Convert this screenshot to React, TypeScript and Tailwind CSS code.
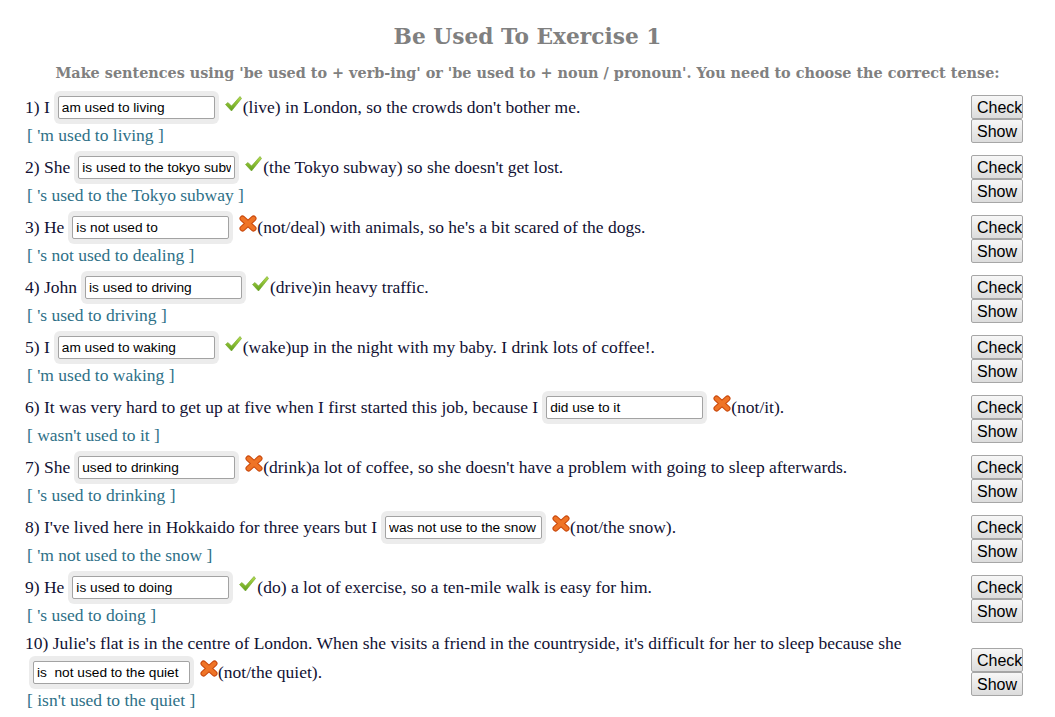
import { ReactNode } from "react";

type Question = {
  pre?: string;
  lead?: string;
  value: string;
  ok: boolean;
  post: string;
  answer: string;
};

const questions: Question[] = [
  { pre: "1) I", value: "am used to living", ok: true, post: "(live) in London, so the crowds don't bother me.", answer: "[ 'm used to living ]" },
  { pre: "2) She", value: "is used to the tokyo subway", ok: true, post: "(the Tokyo subway) so she doesn't get lost.", answer: "[ 's used to the Tokyo subway ]" },
  { pre: "3) He", value: "is not used to", ok: false, post: "(not/deal) with animals, so he's a bit scared of the dogs.", answer: "[ 's not used to dealing ]" },
  { pre: "4) John", value: "is used to driving", ok: true, post: "(drive)in heavy traffic.", answer: "[ 's used to driving ]" },
  { pre: "5) I", value: "am used to waking", ok: true, post: "(wake)up in the night with my baby. I drink lots of coffee!.", answer: "[ 'm used to waking ]" },
  {
    pre: "6) It was very hard to get up at five when I first started this job, because I",
    value: "did use to it",
    ok: false,
    post: "(not/it).",
    answer: "[ wasn't used to it ]"
  },
  {
    pre: "7) She",
    value: "used to drinking",
    ok: false,
    post: "(drink)a lot of coffee, so she doesn't have a problem with going to sleep afterwards.",
    answer: "[ 's used to drinking ]"
  },
  { pre: "8) I've lived here in Hokkaido for three years but I", value: "was not use to the snow", ok: false, post: "(not/the snow).", answer: "[ 'm not used to the snow ]" },
  { pre: "9) He", value: "is used to doing", ok: true, post: "(do) a lot of exercise, so a ten-mile walk is easy for him.", answer: "[ 's used to doing ]" },
  {
    lead: "10) Julie's flat is in the centre of London. When she visits a friend in the countryside, it's difficult for her to sleep because she",
    value: "is  not used to the quiet",
    ok: false,
    post: "(not/the quiet).",
    answer: "[ isn't used to the quiet ]"
  }
];

function Tick() {
  return (
    <svg width="17" height="16" viewBox="0 0 17 16" className="mt-[5px] ml-[2px] mr-[1px] shrink-0 self-start">
      <defs>
        <linearGradient id="tk" x1="0" y1="0" x2="0" y2="1">
          <stop offset="0" stopColor="#b5dc4a" />
          <stop offset="1" stopColor="#5f9e1c" />
        </linearGradient>
      </defs>
      <polygon points="0.5,8.5 3,6.5 6.5,10 15,0.5 16.5,2.5 6.5,15" fill="url(#tk)" stroke="#6fa52a" strokeWidth="0.6" />
    </svg>
  );
}

function Cross() {
  return (
    <svg width="18" height="17" viewBox="0 0 18 17" className="mt-[4px] ml-[2px] shrink-0 self-start">
      <g strokeLinecap="round">
        <path d="M3.5 3.5 L14.5 13.5 M14.5 3.5 L3.5 13.5" stroke="#c9480c" strokeWidth="6" />
        <path d="M3.5 3.5 L14.5 13.5 M14.5 3.5 L3.5 13.5" stroke="#ef7426" strokeWidth="4" />
      </g>
    </svg>
  );
}

function Field({ value }: { value: string }) {
  return (
    <span className="mx-[4px] inline-flex h-[33px] shrink-0 items-center rounded-[6px] bg-[#ececec] px-[4px]">
      <input
        readOnly
        value={value}
        className="h-[23px] w-[157px] rounded-[2px] border border-[#a3a3a3] bg-white px-[3px] font-['Liberation_Sans',Arial,sans-serif] text-[13.7px] text-black outline-none"
      />
    </span>
  );
}

function Line({ children }: { children: ReactNode }) {
  return <div className="flex h-[33px] items-center whitespace-nowrap">{children}</div>;
}

const btn =
  "h-[24px] w-[52px] overflow-hidden whitespace-nowrap rounded-[2px] border border-[#a6a6a6] bg-[linear-gradient(#f7f7f7,#dcdcdc)] pl-[5px] text-left font-['Liberation_Sans',Arial,sans-serif] text-[16px] text-black";

function QuestionRow({ q }: { q: Question }) {
  return (
    <div className="mb-[4px] flex items-center justify-between">
      <div className="flex flex-col">
        {q.lead ? <div className="flex h-[25px] items-center whitespace-nowrap">{q.lead}</div> : null}
        <Line>
          {q.pre ? <span>{q.pre}</span> : null}
          <Field value={q.value} />
          {q.ok ? <Tick /> : <Cross />}
          <span>{q.post}</span>
        </Line>
        <div className="flex h-[23px] items-center pl-[2px] text-[#2e7087]">{q.answer}</div>
      </div>
      <div className="flex w-[52px] shrink-0 flex-col">
        <button className={btn}>Check</button>
        <button className={btn}>Show</button>
      </div>
    </div>
  );
}

export default function App() {
  return (
    <div className="min-h-[717px] w-[1055px] bg-white font-['Liberation_Serif','Times_New_Roman',serif] text-[17.5px] text-[#111133]">
      <h1 className="pt-[21px] text-center font-['DejaVu_Serif',Georgia,serif] text-[21.7px] leading-[32px] font-bold text-[#808080]">
        Be Used To Exercise 1
      </h1>
      <p className="mt-[9px] text-center font-['DejaVu_Serif',Georgia,serif] text-[14.4px] leading-[22px] font-bold text-[#808080]">
        Make sentences using 'be used to + verb-ing' or 'be used to + noun / pronoun'. You need to choose the correct tense:
      </p>
      <div className="pt-[7px] pr-[32px] pl-[25px]">
        {questions.map((q, i) => (
          <QuestionRow key={i} q={q} />
        ))}
      </div>
    </div>
  );
}
